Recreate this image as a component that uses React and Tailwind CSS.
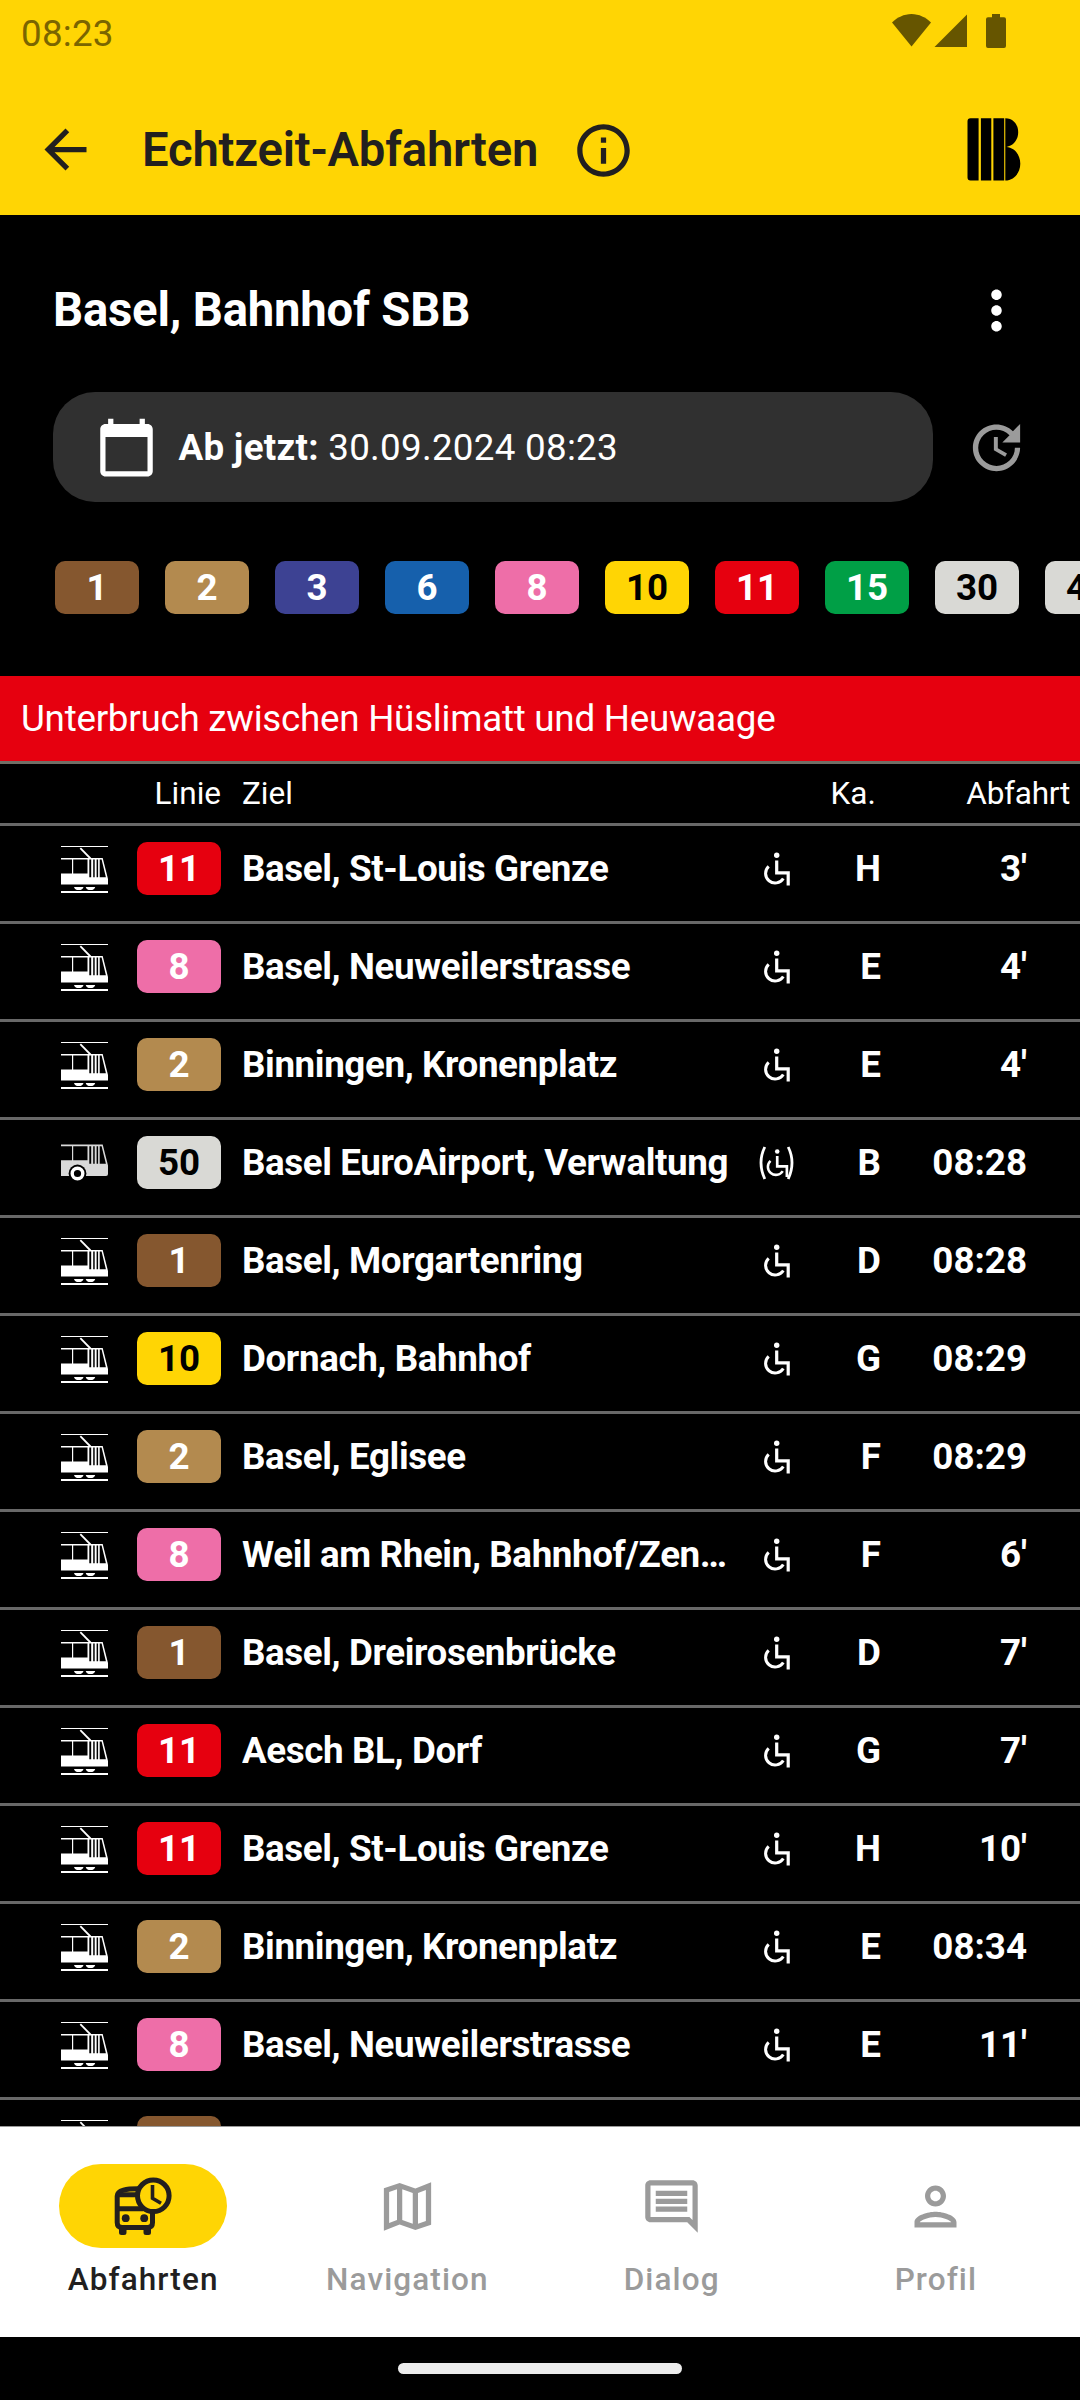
import React from "react";

const LINES = [
    { nr: "1", color: "bg-[#85572f] text-white" },
    { nr: "2", color: "bg-[#b38a4f] text-white" },
    { nr: "3", color: "bg-[#3d4293] text-white" },
    { nr: "6", color: "bg-[#1660ac] text-white" },
    { nr: "8", color: "bg-[#ee6ea8] text-white" },
    { nr: "10", color: "bg-[#ffd504] text-black" },
    { nr: "11", color: "bg-[#e6000f] text-white" },
    { nr: "15", color: "bg-[#009f46] text-white" },
    { nr: "30", color: "bg-[#d9d9d5] text-black" },
    { nr: "48", color: "bg-[#d9d9d5] text-black" },
];

const DEPARTURES = [
    { nr: "11", ziel: "Basel, St-Louis Grenze", kante: "H", abfahrt: "3'" },
    { nr: "8", ziel: "Basel, Neuweilerstrasse", kante: "E", abfahrt: "4'" },
    { nr: "2", ziel: "Binningen, Kronenplatz", kante: "E", abfahrt: "4'" },
    { nr: "50", ziel: "Basel EuroAirport, Verwaltung", kante: "B", abfahrt: "08:28", bus: true, limited: true },
    { nr: "1", ziel: "Basel, Morgartenring", kante: "D", abfahrt: "08:28" },
    { nr: "10", ziel: "Dornach, Bahnhof", kante: "G", abfahrt: "08:29" },
    { nr: "2", ziel: "Basel, Eglisee", kante: "F", abfahrt: "08:29" },
    { nr: "8", ziel: "Weil am Rhein, Bahnhof/Zentrum", kante: "F", abfahrt: "6'" },
    { nr: "1", ziel: "Basel, Dreirosenbrücke", kante: "D", abfahrt: "7'" },
    { nr: "11", ziel: "Aesch BL, Dorf", kante: "G", abfahrt: "7'" },
    { nr: "11", ziel: "Basel, St-Louis Grenze", kante: "H", abfahrt: "10'" },
    { nr: "2", ziel: "Binningen, Kronenplatz", kante: "E", abfahrt: "08:34" },
    { nr: "8", ziel: "Basel, Neuweilerstrasse", kante: "E", abfahrt: "11'" },
    { nr: "1", ziel: "Basel, Badischer Bahnhof", kante: "D", abfahrt: "12'" },
];

// bus lines without an own colour are grey
function lineColor(nr) {
    const line = LINES.find((l) => l.nr === nr);
    return line ? line.color : "bg-[#d9d9d5] text-black";
}

function MaterialIcon({ d, className }) {
    return (
        <svg viewBox="0 0 24 24" className={"w-[63px] h-[63px] shrink-0 " + (className || "")}>
            <path d={d} fill="currentColor" fillRule="evenodd" />
        </svg>
    );
}

const ICONS = {
    back: "M20 11H7.83l5.59-5.59L12 4l-8 8 8 8 1.41-1.41L7.83 13H20v-2z",
    info: "M11 7h2v2h-2zM11 11h2v6h-2zM12 2C6.48 2 2 6.48 2 12s4.48 10 10 10 10-4.48 10-10S17.52 2 12 2zm0 18c-4.41 0-8-3.59-8-8s3.59-8 8-8 8 3.59 8 8-3.59 8-8 8z",
    more: "M12 8c1.1 0 2-.9 2-2s-.9-2-2-2-2 .9-2 2 .9 2 2 2zm0 2c-1.1 0-2 .9-2 2s.9 2 2 2 2-.9 2-2-.9-2-2-2zm0 6c-1.1 0-2 .9-2 2s.9 2 2 2 2-.9 2-2-.9-2-2-2z",
    calendar: "M20 3h-1V1h-2v2H7V1H5v2H4c-1.1 0-2 .9-2 2v16c0 1.1.9 2 2 2h16c1.1 0 2-.9 2-2V5c0-1.1-.9-2-2-2zm0 18H4V8h16v13z",
    update: "M21 10.12h-6.78l2.74-2.82c-2.73-2.7-7.15-2.8-9.88-.1-2.73 2.71-2.73 7.08 0 9.79s7.15 2.71 9.88 0C18.32 15.65 19 14.08 19 12.1h2c0 1.98-.88 4.55-2.64 6.29-3.51 3.48-9.21 3.48-12.72 0-3.5-3.47-3.53-9.11-.02-12.58s9.14-3.47 12.65 0L21 3v7.12zM12.5 8v4.25l3.5 2.08-.72 1.21L11 13V8h1.5z",
    map: "M15 5.1 9 3 3 5.02v16.2l6-2.33 6 2.1 6-2.02V2.77L15 5.1zM10 5.47l4 1.4v11.66l-4-1.4V5.47zM5 6.46l3-1.01v11.7l-3 1.16zM19 17.54l-3 1.01V6.86l3-1.16z",
    dialog: "M21.99 4c0-1.1-.89-2-1.99-2H4c-1.1 0-2 .9-2 2v12c0 1.1.9 2 2 2h14l4 4-.01-18zM20 4v13.17L18.83 16H4V4h16zM6 12h12v2H6zM6 9h12v2H6zM6 6h12v2H6z",
    profile: "M12 6c1.1 0 2 .9 2 2s-.9 2-2 2-2-.9-2-2 .9-2 2-2m0 10c2.7 0 5.8 1.29 6 2H6c.23-.72 3.31-2 6-2m0-12C9.79 4 8 5.79 8 8s1.79 4 4 4 4-1.79 4-4-1.79-4-4-4zm0 10c-2.67 0-8 1.34-8 4v2h16v-2c0-2.66-5.33-4-8-4z",
};

function StatusIcons() {
    return (
        <svg viewBox="0 0 116 36" className="w-[116px] h-[36px]" fill="#665500">
            <path d="M0 9.500C5 4.500 12 1 19.500 1S34 4.500 39 9.500L19.500 33.500z" />
            <path d="M75 1.500V34H42.500z" />
            <path d="M100 1h8v3.300h4a2 2 0 0 1 2 2V33a2 2 0 0 1-2 2H96a2 2 0 0 1-2-2V6.300a2 2 0 0 1 2-2h4z" />
        </svg>
    );
}

function Logo() {
    return (
        <svg viewBox="0 0.800 54 64" className="w-[54px] h-[64px] shrink-0" fill="#000">
            <path d="M3.500 1H11.600V63.300H3.500a3 3 0 0 1-3-3V4a3 3 0 0 1 3-3z" />
            <path d="M13.900 1H24.300V63.300H13.900zM26.400 1H37.200V63.300H26.400z" />
            <path d="M38.300 1C46 1 51.200 7 51.200 15S46 29 39.500 29.700C47.500 30.200 53.300 37.500 53.300 46.500S47 63.300 38.300 63.300z" />
        </svg>
    );
}

function TramIcon() {
    return (
        <svg viewBox="0 0 47 48" className="w-[47px] h-[48px] shrink-0" fill="#fff">
            <path d="M0 1.100h47v1H0z" />
            <path d="M19.300 3.200L29.500 13.500" stroke="#fff" strokeWidth="1.800" />
            <path
                fillRule="evenodd"
                d="M0 13h41.700L47 34v5.600H0V28.500h26.500V14.500H0z
                   M28.300 14.500h1.900v17.800h-1.900zM32.200 14.500h1.500v17.800h-1.500zM35.600 14.500h1.500v17.800h-1.500zM38.700 14.500h1.900l4.300 17.800h-6.200z"
            />
            <path d="M11 14h1.200v15H11z" />
            <path d="M13 42h9.500a4.800 3.600 0 0 1-9.500 0zM24.700 42h9.500a4.800 3.600 0 0 1-9.500 0zM0 46h47v2H0z" />
        </svg>
    );
}

function BusIcon() {
    return (
        <svg viewBox="0 0 47 48" className="w-[47px] h-[48px] shrink-0" fill="#d9d9d9">
            <path
                fillRule="evenodd"
                d="M0 5.500h41.700L47 26.500v8.500q0 2-2 2H0V21.200h26.500V7.300H0z
                   M28.300 7.300h1.900v17.500h-1.900zM32.200 7.300h1.500v17.500h-1.500zM35.600 7.300h1.500v17.500h-1.500zM38.700 7.300h1.900l4.300 17.500h-6.200z"
            />
            <path d="M11 7h1.200v15H11z" />
            <circle cx="16.500" cy="34.500" r="8.900" fill="#000" />
            <circle cx="16.500" cy="34.500" r="5.300" fill="none" stroke="#fff" strokeWidth="3.400" />
        </svg>
    );
}

function WheelchairIcon({ limited }) {
    return (
        <svg viewBox="0.500 0 38 36" className="w-[38px] h-[36px]" fill="none" stroke="#fff">
            {limited && <path d="M7.300 2Q-.3 17.500 7.300 34M30.700 2Q38.300 17.500 30.700 34" strokeWidth="2.800" />}
            <g transform={limited ? "translate(3.600 3) scale(.84)" : undefined}>
                <circle cx="19.200" cy="4.200" r="2.700" fill="#fff" stroke="none" />
                <path d="M19.200 9.500V21.800H30.700V34.500" strokeWidth="3.200" />
                <path d="M11.200 15.300A9.600 9.600 0 1 0 25.800 27.500" strokeWidth="3" />
            </g>
        </svg>
    );
}

function BusClockIcon() {
    return (
        <svg viewBox="0 0 60 60" className="w-[60px] h-[60px]" fill="none" stroke="#221f1f" strokeWidth="5">
            <path d="M25 12.700C14 12.700 4.200 14 4.200 20V46.500Q4.200 51.500 9.200 51.500H34.500Q39.500 51.500 39.500 46.500V36" />
            <path d="M4 18.800H24M4 32.800H30" />
            <path d="M6 50V56.500a2.500 2.500 0 0 0 2.500 2.500h2.500a2.500 2.500 0 0 0 2.500-2.500V50zM30.500 50V56.500a2.500 2.500 0 0 0 2.500 2.500H35.500a2.500 2.500 0 0 0 2.500-2.500V50z" fill="#221f1f" stroke="none" />
            <circle cx="12.700" cy="42.200" r="3.900" fill="#221f1f" stroke="none" />
            <circle cx="31.200" cy="42.200" r="3.900" fill="#221f1f" stroke="none" />
            <circle cx="40.300" cy="19.800" r="15.800" fill="#ffd504" />
            <path d="M39.500 9V22.300L48 27.300" strokeWidth="3.600" />
        </svg>
    );
}

function LineBadge({ nr }) {
    return (
        <div
            className={
                "w-[84px] h-[53px] pt-[2px] shrink-0 rounded-[10px] flex items-center justify-center text-[36.75px] font-bold " +
                lineColor(nr)
            }
        >
            {nr}
        </div>
    );
}

function DepartureRow({ departure }) {
    return (
        <div className="h-[98px] shrink-0 border-b-3 border-[#686868] pt-4 pl-[60.500px] pr-[53px]">
            <div className="h-[53px] flex items-center text-[36.75px] font-bold">
                {departure.bus ? <BusIcon /> : <TramIcon />}
                <div className="ml-[29.500px]">
                    <LineBadge nr={departure.nr} />
                </div>
                <div className="ml-[21px] w-[488px] pt-[2px] truncate tracking-[-0.390px]">{departure.ziel}</div>
                <div className="ml-[28px] w-[38px]">
                    <WheelchairIcon limited={departure.limited} />
                </div>
                <div className="w-[85px] pt-[2px] text-right">{departure.kante}</div>
                <div className="grow pt-[2px] text-right">{departure.abfahrt}</div>
            </div>
        </div>
    );
}

function NavItem({ label, active, children }) {
    return (
        <div className={"flex-1 flex flex-col items-center " + (active ? "text-[#221f1f]" : "text-[#9b9b9b]")}>
            <div className={"w-[168px] h-[84px] rounded-full flex items-center justify-center " + (active ? "bg-[#ffd504]" : "")}>
                {children}
            </div>
            <div className="mt-[11px] h-[42px] leading-[42px] text-[31.5px] font-medium tracking-[1.100px]">{label}</div>
        </div>
    );
}

function App() {
    return (
        <div className="w-[1080px] h-[2400px] bg-black text-white font-[Roboto,sans-serif] leading-[1.2] flex flex-col overflow-hidden">
            <header className="h-[215px] shrink-0 bg-[#ffd504] text-[#221f1f]">
                <div className="h-[84px] pl-[21px] pr-[72px] flex items-start justify-between">
                    <div className="pt-[11.500px] text-[36.75px] tracking-[0.250px] text-[#7a6500]">08:23</div>
                    <div className="pt-[13px]">
                        <StatusIcons />
                    </div>
                </div>
                <div className="h-[131px] pl-[34px] pr-[59.500px] flex items-center">
                    <MaterialIcon d={ICONS.back} />
                    <h1 className="ml-[45px] w-[396px] pt-[2px] whitespace-nowrap text-[47.25px] font-semibold tracking-[-0.220px]">
                        Echtzeit-Abfahrten
                    </h1>
                    <MaterialIcon d={ICONS.info} className="ml-[34px] mt-px" />
                    <div className="ml-auto">
                        <Logo />
                    </div>
                </div>
            </header>

            <section className="h-[461px] shrink-0 pt-[63px] overflow-hidden">
                <div className="h-16 pl-[53px] pr-[52px] flex items-center justify-between">
                    <h2 className="text-[47.25px] font-bold tracking-[-0.200px]">Basel, Bahnhof SBB</h2>
                    <MaterialIcon d={ICONS.more} />
                </div>
                <div className="mt-[50px] pl-[53px] pr-[52px] flex items-center justify-between">
                    <div className="w-[880px] h-[110px] pl-[41.500px] rounded-[42px] bg-[#303030] flex items-center text-[36.75px]">
                        <MaterialIcon d={ICONS.calendar} />
                        <p className="ml-[21px] pt-[2px] whitespace-nowrap tracking-[0.280px]">
                            <span className="font-bold">Ab jetzt:</span> 30.09.2024 08:23
                        </p>
                    </div>
                    <MaterialIcon d={ICONS.update} className="text-[#9b9b9b]" />
                </div>
                <div className="mt-[59px] pl-[55px] flex gap-[26px]">
                    {LINES.map((line) => (
                        <LineBadge key={line.nr} nr={line.nr} />
                    ))}
                </div>
            </section>

            <main className="flex-1 min-h-0 overflow-hidden flex flex-col">
                <div className="h-[88px] shrink-0 pt-[2px] pl-[21px] bg-[#e6000f] border-b-3 border-[#716f66] flex items-center text-[36.75px] tracking-[-0.250px]">
                    Unterbruch zwischen Hüslimatt und Heuwaage
                </div>
                <div className="h-[62px] shrink-0 border-b-3 border-[#686868] pr-[10px] flex items-center text-[31.5px]">
                    <div className="w-[221px] text-right">Linie</div>
                    <div className="ml-[21px] w-[588.500px]">Ziel</div>
                    <div>Ka.</div>
                    <div className="ml-auto tracking-[-0.250px]">Abfahrt</div>
                </div>
                {DEPARTURES.map((departure, i) => (
                    <DepartureRow key={i} departure={departure} />
                ))}
            </main>

            <nav className="h-[211px] shrink-0 bg-white border-t border-[#999] pt-[37px] pl-[11px] pr-[12px] flex">
                <NavItem label="Abfahrten" active>
                    <BusClockIcon />
                </NavItem>
                <NavItem label="Navigation">
                    <MaterialIcon d={ICONS.map} />
                </NavItem>
                <NavItem label="Dialog">
                    <MaterialIcon d={ICONS.dialog} />
                </NavItem>
                <NavItem label="Profil">
                    <MaterialIcon d={ICONS.profile} />
                </NavItem>
            </nav>
            <div className="h-[63px] shrink-0 flex justify-center pt-[26px]">
                <div className="w-[284px] h-[11px] rounded-full bg-[#ececec]" />
            </div>
        </div>
    );
}

export default App;
